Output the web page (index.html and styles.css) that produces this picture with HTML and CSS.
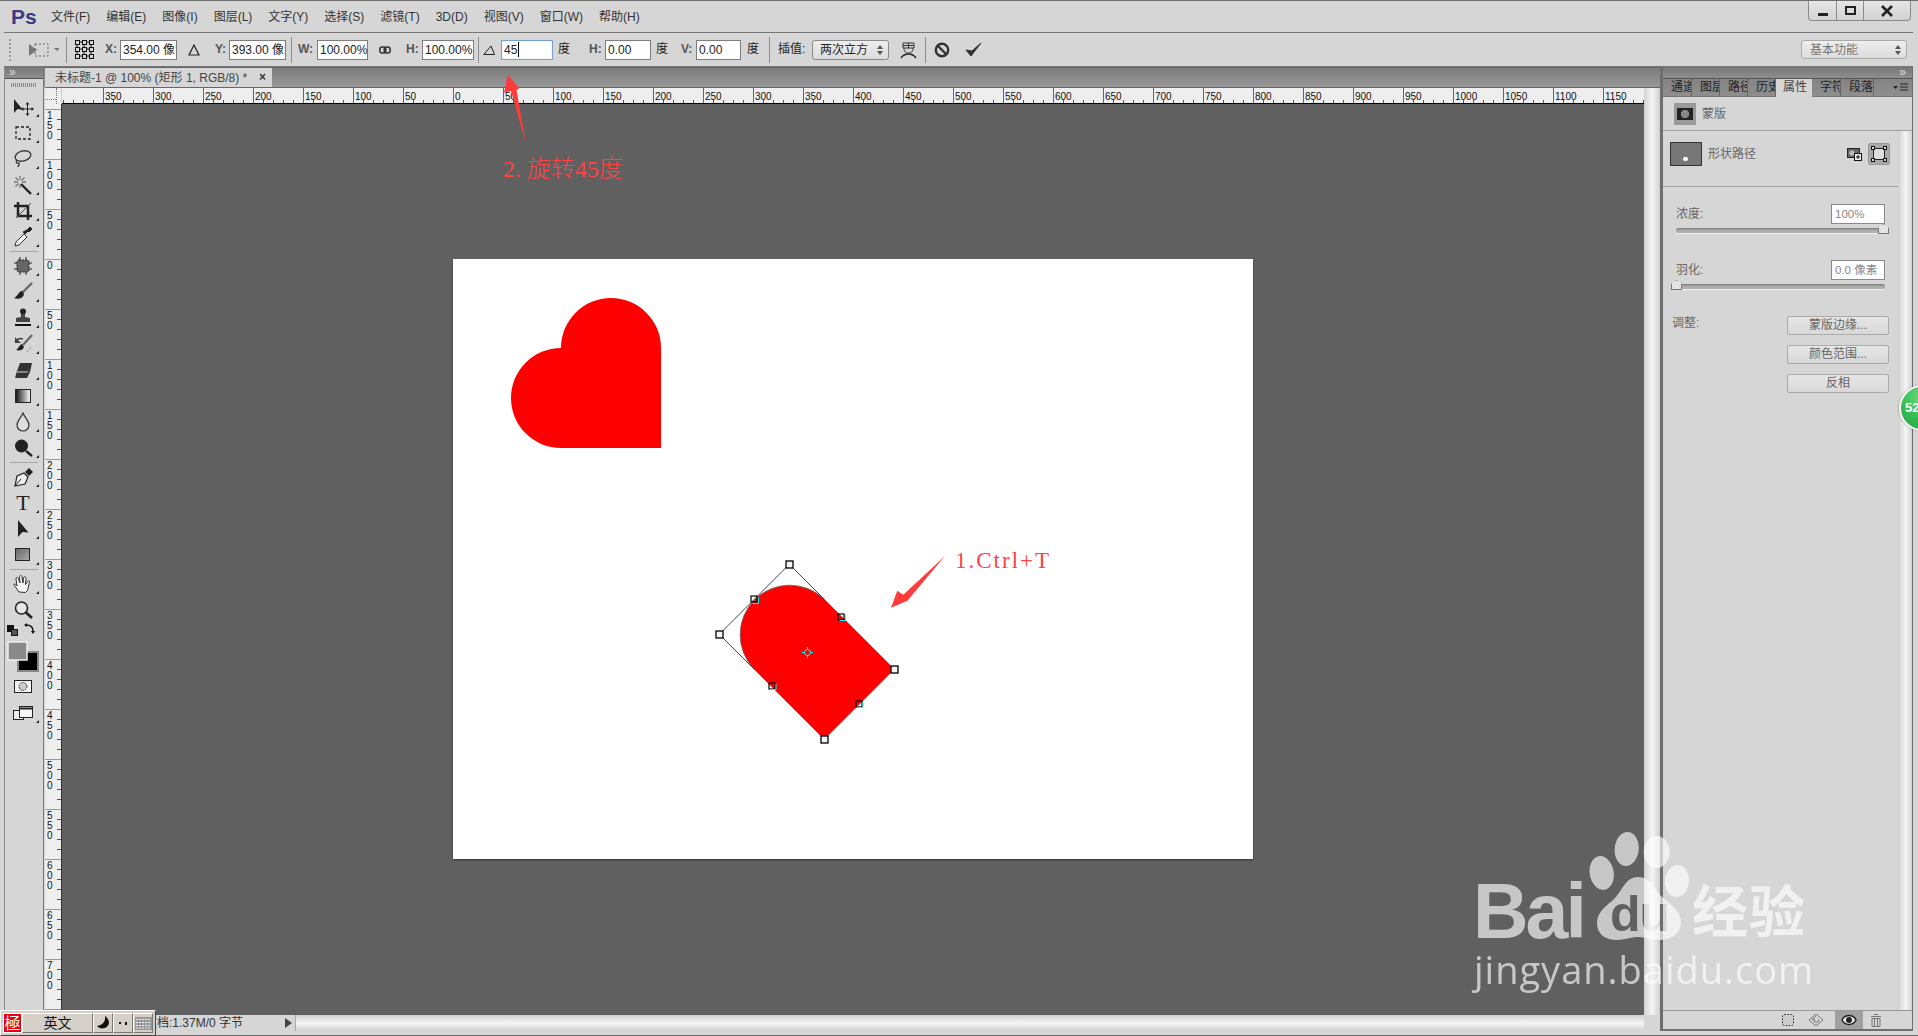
FILE: index.html
```html
<!DOCTYPE html>
<html lang="zh">
<head>
<meta charset="utf-8">
<title>Photoshop</title>
<link rel="stylesheet" href="styles.css">
</head>
<body>
<div class="app">
  <header class="titlebar">
    <div class="logo">Ps</div>
    <nav class="menu">
      <span>文件(F)</span><span>编辑(E)</span><span>图像(I)</span><span>图层(L)</span><span>文字(Y)</span><span>选择(S)</span><span>滤镜(T)</span><span>3D(D)</span><span>视图(V)</span><span>窗口(W)</span><span>帮助(H)</span>
    </nav>
    <div class="winbtns">
      <div class="winbtn wb-min"><i class="min-bar"></i></div>
      <div class="winbtn wb-max"><i class="max-box"></i></div>
      <div class="winbtn wb-close">
        <svg width="14" height="12" viewBox="0 0 14 12"><path d="M2 1l10 10M12 1L2 11" stroke="#222" stroke-width="2.6" fill="none"/></svg>
      </div>
    </div>
  </header>

  <section class="options">
    <i class="grip ml5"></i>
    <svg class="ml17 w22" width="22" height="18" viewBox="0 0 22 18"><path d="M1 3l8 6-8 6z" fill="#777"/><rect x="7" y="3" width="13" height="12" fill="none" stroke="#666" stroke-dasharray="2 2"/></svg>
    <svg class="ml4 w5" width="5" height="4" viewBox="0 0 5 4"><path d="M0 0h6L3 3z" fill="#777"/></svg>
    <i class="sep ml7"></i>
    <svg class="ml8 w19" width="19" height="24" viewBox="0 0 19 24"><g fill="#d6d6d6" stroke="#111"><rect x=".5" y="2.5" width="4" height="4"/><rect x="7.5" y="2.5" width="4" height="4"/><rect x="14.5" y="2.5" width="4" height="4"/><rect x=".5" y="9.5" width="4" height="4"/><rect x="7.5" y="9.5" width="4" height="4"/><rect x="14.5" y="9.5" width="4" height="4"/><rect x=".5" y="16.5" width="4" height="4"/><rect x="7.5" y="16.5" width="4" height="4"/><rect x="14.5" y="16.5" width="4" height="4"/></g><path d="M2 7v2M9 7v2M16 7v2M2 14v2M9 14v2M16 14v2M5 4h2M12 4h2M5 11h2M12 11h2M5 18h2M12 18h2" stroke="#111"/></svg>
    <span class="lab ml11 w11">X:</span>
    <div class="field ml4 w57">354.00 像素</div>
    <svg class="ml11 w12" width="12" height="12" viewBox="0 0 12 12"><path d="M6 1L1 11h10z" fill="none" stroke="#222" stroke-width="1.2"/></svg>
    <span class="lab ml15 w10">Y:</span>
    <div class="field ml4 w57">393.00 像素</div>
    <i class="sep ml5"></i>
    <span class="lab ml6 w14">W:</span>
    <div class="field ml5 w51">100.00%</div>
    <svg class="ml11 w12" width="12" height="8" viewBox="0 0 12 8"><rect x=".8" y="1" width="6" height="6" rx="2.5" fill="none" stroke="#333" stroke-width="1.5"/><rect x="5.2" y="1" width="6" height="6" rx="2.5" fill="none" stroke="#333" stroke-width="1.5"/></svg>
    <span class="lab ml15 w11">H:</span>
    <div class="field ml5 w52">100.00%</div>
    <i class="sep ml4"></i>
    <svg class="ml4 w12" width="12" height="10" viewBox="0 0 12 10"><path d="M11.5 9.5H.8L8 1z" fill="none" stroke="#222"/></svg>
    <div class="field focus ml6 w52">45<i class="caret"></i></div>
    <span class="unit ml5 w12">度</span>
    <span class="lab ml19 w11">H:</span>
    <div class="field ml5 w46">0.00</div>
    <span class="unit ml5 w12">度</span>
    <span class="lab ml13 w11">V:</span>
    <div class="field ml4 w45">0.00</div>
    <span class="unit ml6 w12">度</span>
    <i class="sep ml10"></i>
    <span class="unit ml8 w28">插值:</span>
    <div class="select ml6 w77"><span>两次立方</span><i class="updown"></i></div>
    <svg class="ml11 w17" width="17" height="20" viewBox="0 0 17 20"><path d="M3 3h11v5H3zM3 5.500h11M8.500 3v5M4 8c0 4 2 5 4.500 5S13 12 13 8" fill="none" stroke="#333"/><path d="M1 18c2-3 4-4 7.500-4S14 15 16 18" fill="none" stroke="#222" stroke-width="1.500"/></svg>
    <i class="sep ml8"></i>
    <svg class="ml8 w16" width="16" height="16" viewBox="0 0 16 16"><circle cx="8" cy="8" r="6.200" fill="none" stroke="#333" stroke-width="2.400"/><path d="M3.500 3.500l9 9" stroke="#333" stroke-width="2.400"/></svg>
    <svg class="ml15 w17" width="17" height="15" viewBox="0 0 17 15"><path d="M1 8l5 6L16 1l-9 8z" fill="#333" stroke="#333"/></svg>
    <div class="select workspace"><span>基本功能</span><i class="updown"></i></div>
  </section>

  <main class="main">
    <aside class="leftdock">
      <div class="dockhead"><span class="chev">»</span></div>
      <div class="toolbar">
        <i class="toolgrip"></i>
        <div class="tool more"><svg width="24" height="22" viewBox="0 0 24 22"><path d="M3 3v14l3.500-4 5.500 1z" fill="#222"/><path d="M16.500 7v12M11 13h11" stroke="#222"/><path d="M16.500 6l-2 2.500h4zM16.500 20l-2-2.500h4zM10 13l2.500-2v4zM23 13l-2.500-2v4z" fill="#222"/></svg></div>
        <div class="tool more"><svg width="22" height="22" viewBox="0 0 22 22"><rect x="4" y="5" width="14" height="12" fill="none" stroke="#222" stroke-width="1.300" stroke-dasharray="3 2"/></svg></div>
        <div class="tool more"><svg width="22" height="22" viewBox="0 0 22 22"><ellipse cx="11" cy="8" rx="8" ry="5" transform="rotate(-15 11 8)" fill="none" stroke="#333" stroke-width="1.300"/><path d="M5 12c-2 2 0 4 2 3 1 1-1 3-1 4" fill="none" stroke="#333" stroke-width="1.300"/></svg></div>
        <div class="tool more"><svg width="22" height="22" viewBox="0 0 22 22"><path d="M9 10l10 10" stroke="#222" stroke-width="2.400"/><path d="M8 2v4M8 10v4M2 8h4M10 8h4M3.500 3.500l3 3M12.500 3.500l-3 3M3.500 12.500l3-3" stroke="#777" stroke-width="1.300"/></svg></div>
        <div class="tool more"><svg width="22" height="22" viewBox="0 0 22 22"><path d="M6 2v14h14M2 6h14v14" fill="none" stroke="#222" stroke-width="2.500"/><path d="M4 18L19 3" stroke="#444"/></svg></div>
        <div class="tool more"><svg width="22" height="22" viewBox="0 0 22 22"><path d="M3 20l1-4 8-8 3 3-8 8z" fill="#f2f2f2" stroke="#333"/><path d="M11 6l2 2 3-3 1 1 3-3-1-1-1-1-3 3z" fill="#222" stroke="#222"/></svg></div>
        <i class="toolsep"></i>
        <div class="tool more"><svg width="22" height="22" viewBox="0 0 22 22"><rect x="5" y="5" width="12" height="12" rx="2" fill="#666" stroke="#222" stroke-dasharray="2 1"/><path d="M2 8h3M2 14h3M17 8h3M17 14h3M8 2v3M14 2v3M8 17v3M14 17v3" stroke="#222"/></svg></div>
        <div class="tool more"><svg width="22" height="22" viewBox="0 0 22 22"><path d="M20 2L10 12" stroke="#666" stroke-width="2.400"/><path d="M10 10c-3 0-4 5-8 7 3 1.500 9 1 10-4z" fill="#222"/></svg></div>
        <div class="tool more"><svg width="22" height="22" viewBox="0 0 22 22"><circle cx="11" cy="4.500" r="3" fill="#222"/><path d="M9 7h4v3l5 1v4H4v-4l5-1z" fill="#444"/><path d="M3 18h16" stroke="#111" stroke-width="2"/></svg></div>
        <div class="tool more"><svg width="22" height="22" viewBox="0 0 22 22"><path d="M3 9c2-3 5-4 8-3" fill="none" stroke="#444" stroke-width="1.500"/><path d="M3 4v6h6z" fill="#444"/><path d="M20 2L11 12" stroke="#666" stroke-width="2.200"/><path d="M10 11c-2 0-3 4-6 6 3 1 7 .5 8-3z" fill="#222"/><path d="M15 19l4-5" stroke="#666" stroke-dasharray="1 1.500"/></svg></div>
        <div class="tool more"><svg width="22" height="22" viewBox="0 0 22 22"><path d="M8 4h12l-2 9-3 6H3l2-7z" fill="#333"/><path d="M5 12h12l-2 2H4z" fill="#888"/></svg></div>
        <div class="tool more"><svg width="22" height="22" viewBox="0 0 22 22"><defs><linearGradient id="grA"><stop offset="0" stop-color="#111"/><stop offset="1" stop-color="#fff"/></linearGradient></defs><rect x="3.500" y="4.500" width="15" height="13" fill="url(#grA)" stroke="#222"/></svg></div>
        <div class="tool more"><svg width="22" height="22" viewBox="0 0 22 22"><path d="M11 2c2 5 6 8 6 12a6 6 0 0 1-12 0c0-4 4-7 6-12z" fill="#ddd" stroke="#333" stroke-width="1.200"/></svg></div>
        <div class="tool more"><svg width="22" height="22" viewBox="0 0 22 22"><circle cx="9.500" cy="9" r="6.500" fill="#222"/><path d="M14 14l6 5" stroke="#222" stroke-width="2.400"/></svg></div>
        <i class="toolsep"></i>
        <div class="tool more"><svg width="22" height="22" viewBox="0 0 22 22"><path d="M3 20l2-10 7-3 4 4-3 7z" fill="#eee" stroke="#222" stroke-width="1.200"/><path d="M3 20l6-7" stroke="#222"/><path d="M13 6l4-4 4 4-4 4z" fill="#222"/></svg></div>
        <div class="tool more typetool">T</div>
        <div class="tool more"><svg width="22" height="22" viewBox="0 0 22 22"><path d="M6 2v17l4.500-5 6 .5z" fill="#222"/></svg></div>
        <div class="tool more"><svg width="22" height="22" viewBox="0 0 22 22"><defs><linearGradient id="grB" x2="1" y2="1"><stop offset="0" stop-color="#666"/><stop offset="1" stop-color="#aaa"/></linearGradient></defs><rect x="3.500" y="4.500" width="14" height="12" fill="url(#grB)" stroke="#222"/></svg></div>
        <i class="toolsep"></i>
        <div class="tool more"><svg width="22" height="22" viewBox="0 0 22 22"><path d="M7 19l-5-7c0-2 2-1 3 1L4 6c0-2 2-2 2.500 0L8 10 7.500 4c0-2 2.500-2 2.500 0l1 6 .5-5c.5-2 2.500-1.500 2.500.5l-.5 6 2-3c1.500-1.500 2.500 0 2 1l-2 8-2 2z" fill="#f4f4f4" stroke="#333"/></svg></div>
        <div class="tool"><svg width="22" height="22" viewBox="0 0 22 22"><circle cx="9.500" cy="9" r="6" fill="#e8e8e8" stroke="#222" stroke-width="1.600"/><path d="M14 13.500l6 5.500" stroke="#222" stroke-width="2.600"/></svg></div>
        <div class="colors">
          <svg width="39" height="51" viewBox="2 0 39 51"><rect x="4.500" y="2.500" width="6" height="6" fill="#111" stroke="#111"/><rect x="8.500" y="6.500" width="6" height="6" fill="#555" stroke="#111"/><path d="M23 2c4 0 7 2 7 6" fill="none" stroke="#111" stroke-width="1.400"/><path d="M21 2l3-2v4zM30 11l-2-3h4z" fill="#111"/><rect x="15" y="29" width="20" height="19" fill="#000" stroke="#888" stroke-width="2"/><rect x="5" y="19" width="19" height="18" fill="#8a8a8a" stroke="#eee" stroke-width="1.500"/></svg>
        </div>
        <div class="tool"><svg width="22" height="18" viewBox="0 0 22 18"><rect x="2.500" y="2.500" width="17" height="12" fill="#f4f4f4" stroke="#222"/><circle cx="11" cy="8.500" r="4" fill="#ccc" stroke="#222" stroke-dasharray="1.500 1"/></svg></div>
        <div class="tool more"><svg width="22" height="22" viewBox="0 0 22 22"><rect x="1.500" y="8.500" width="10" height="9" fill="#eee" stroke="#222"/><rect x="7.500" y="4.500" width="13" height="11" fill="#f4f4f4" stroke="#222"/><path d="M7.500 6.500h13" stroke="#222" stroke-width="2"/></svg></div>
      </div>
    </aside>

    <section class="center">
      <div class="tabbar">
        <div class="doctab"><span class="doctitle">未标题-1 @ 100% (矩形 1, RGB/8) *</span><span class="tabx">×</span></div>
      </div>
      <div class="hruler">
        <div class="corner"></div>
        <div class="hstrip">
          <span class="hpart"></span>
          <span class="hcell">350</span><span class="hcell">300</span><span class="hcell">250</span><span class="hcell">200</span><span class="hcell">150</span><span class="hcell">100</span><span class="hcell">50</span><span class="hcell">0</span><span class="hcell">50</span><span class="hcell">100</span><span class="hcell">150</span><span class="hcell">200</span><span class="hcell">250</span><span class="hcell">300</span><span class="hcell">350</span><span class="hcell">400</span><span class="hcell">450</span><span class="hcell">500</span><span class="hcell">550</span><span class="hcell">600</span><span class="hcell">650</span><span class="hcell">700</span><span class="hcell">750</span><span class="hcell">800</span><span class="hcell">850</span><span class="hcell">900</span><span class="hcell">950</span><span class="hcell">1000</span><span class="hcell">1050</span><span class="hcell">1100</span><span class="hcell">1150</span>
        </div>
        <div class="vscroll"></div>
      </div>
      <div class="work">
        <div class="vruler">
          <span class="vpart"></span>
          <span class="vcell"><b>150</b></span><span class="vcell"><b>100</b></span><span class="vcell"><b>50</b></span><span class="vcell"><b>0</b></span><span class="vcell"><b>50</b></span><span class="vcell"><b>100</b></span><span class="vcell"><b>150</b></span><span class="vcell"><b>200</b></span><span class="vcell"><b>250</b></span><span class="vcell"><b>300</b></span><span class="vcell"><b>350</b></span><span class="vcell"><b>400</b></span><span class="vcell"><b>450</b></span><span class="vcell"><b>500</b></span><span class="vcell"><b>550</b></span><span class="vcell"><b>600</b></span><span class="vcell"><b>650</b></span><span class="vcell"><b>700</b></span><span class="vcell"></span>
        </div>
        <div class="canvas">
          <div class="doc">
            <svg class="art" width="800" height="600" viewBox="453 259 800 600">
              <path d="M561 348a50 50 0 0 1 100 0v100H561a50 50 0 0 1 0-100z" fill="#ff0000"/>
              <path d="M894.300 669.300L824.300 739.300L754.300 669.300A49.500 49.500 0 0 1 824.300 599.300z" fill="#ff0000" stroke="#666" stroke-width=".8"/>
              <path d="M789.300 564.300L719.300 634.300L754.300 669.300M789.300 564.300L824.300 599.300" fill="none" stroke="#333" stroke-width=".9"/>
              <g fill="#f4f4f4" stroke="#000" stroke-width="1.300">
                <rect x="786" y="561" width="7" height="7"/><rect x="716" y="631" width="7" height="7"/><rect x="891" y="666" width="7" height="7"/><rect x="821" y="736" width="7" height="7"/>
              </g>
              <g fill="none" stroke="#000" stroke-width="1.200">
                <rect x="751" y="596" width="6" height="6"/><rect x="838" y="614" width="6" height="6"/><rect x="769" y="683" width="6" height="6"/><rect x="856" y="701" width="6" height="6"/>
              </g>
              <g fill="none" stroke="#0ff" stroke-width="1">
                <path d="M752.500 603.500h6v-6M839.500 620.500h6v-6M770 689.500h6v-6M857 707.500h6v-6"/>
                <circle cx="807.500" cy="652.500" r="3"/><path d="M802 652.500h3M810 652.500h3M807.500 647v3M807.500 655v3"/>
              </g>
            </svg>
          </div>
        </div>
        <div class="vscroll"></div>
      </div>
      <div class="statusrow">
        <div class="status"><span class="statustext">文档:1.37M/0 字节</span><i class="statusarrow"></i></div>
        <div class="hscroll"></div>
        <div class="scrollcorner"></div>
      </div>
    </section>

    <aside class="rightdock">
      <div class="dockhead righthead"><span class="chev">»</span></div>
      <div class="ptabs">
        <span class="ptab pw29">通道</span><span class="ptab pw28">图层</span><span class="ptab pw28">路径</span><span class="ptab pw28">历史</span><span class="ptab pw36 active">属性</span><span class="ptab pw29">字符</span><span class="ptab pw33">段落</span>
        <svg class="pmenu" width="16" height="9" viewBox="0 0 16 9"><path d="M0 3h5L2.500 6z" fill="#222"/><path d="M7 1h8M7 4h8M7 7h8" stroke="#222"/></svg>
      </div>
      <div class="maskrow">
        <div class="maskicon"><i class="maskdot"></i></div>
        <span>蒙版</span>
      </div>
      <div class="pbody">
        <div class="pcontent">
          <div class="shaperow">
            <div class="shapethumb"><i></i></div>
            <span class="shapename">形状路径</span>
            <svg class="addmask" width="15" height="14" viewBox="0 0 15 14"><rect x=".5" y="1.500" width="12" height="9" fill="#666" stroke="#222"/><circle cx="5" cy="6" r="2.600" fill="#bbb"/><rect x="7.500" y="6.500" width="7" height="7" fill="#eee" stroke="#111"/><path d="M11 8v4M9 10h4" stroke="#111"/></svg>
            <div class="pathbtn"><svg width="16" height="16" viewBox="0 0 16 16"><rect x="2.500" y="2.500" width="11" height="11" fill="#ddd" stroke="#222"/><g fill="#ddd" stroke="#111"><rect x=".5" y=".5" width="3" height="3"/><rect x="12.500" y=".5" width="3" height="3"/><rect x=".5" y="12.500" width="3" height="3"/><rect x="12.500" y="12.500" width="3" height="3"/></g></svg></div>
          </div>
          <div class="propline first"><span>浓度:</span><div class="pfield">100%</div></div>
          <div class="slider"><i class="thumb thumb-right"></i></div>
          <div class="propline"><span>羽化:</span><div class="pfield">0.0 像素</div></div>
          <div class="slider"><i class="thumb thumb-left"></i></div>
          <div class="adjust">
            <span class="adjlabel">调整:</span>
            <div class="adjbtns">
              <div class="pbtn">蒙版边缘...</div>
              <div class="pbtn">颜色范围...</div>
              <div class="pbtn">反相</div>
            </div>
          </div>
        </div>
        <div class="pscroll"></div>
      </div>
      <div class="pfoot">
        <svg class="fi1" width="14" height="14" viewBox="0 0 14 14"><rect x="1.500" y="1.500" width="11" height="11" rx="2" fill="#ccc" stroke="#222" stroke-dasharray="1.500 1.500"/></svg>
        <svg class="fi2" width="16" height="14" viewBox="0 0 16 14"><path d="M8 1l7 6-7 6-7-6z" fill="none" stroke="#777"/><path d="M8 3L4 6.500h2.500V9h4V6.500" fill="none" stroke="#777"/></svg>
        <div class="fi3"><svg width="16" height="12" viewBox="0 0 16 12"><path d="M1 6c3-6 11-6 14 0-3 6-11 6-14 0z" fill="#eee" stroke="#222" stroke-width="1.500"/><circle cx="8" cy="6" r="3" fill="#222"/></svg></div>
        <svg class="fi4" width="12" height="14" viewBox="0 0 12 14"><path d="M4 1.500h4M1 3.500h10M2 5.500h8v8H2zM4.500 6v7M7.500 6v7" fill="none" stroke="#777"/></svg>
      </div>
    </aside>
  </main>
  <div class="winbottom"></div>

  <div class="badge"><span>52</span></div>

  <div class="ime">
    <div class="seal">極</div>
    <div class="imebtn imelang">英文</div>
    <div class="imebtn"><svg width="16" height="16" viewBox="0 0 16 16"><path d="M10 1c1 5-2 9-8 10 3 4 11 3 12-3 0-3-2-6-4-7z" fill="#111"/></svg></div>
    <div class="imebtn imedots"><svg width="10" height="8" viewBox="0 0 10 8"><rect x="1" y="3" width="2" height="2" fill="#111"/><rect x="7" y="3" width="2" height="3" fill="#111"/></svg></div>
    <div class="imebtn imekey"><svg width="17" height="13" viewBox="0 0 17 13"><rect width="17" height="13" fill="#999"/><path d="M1 2.500h15M1 5.500h15M1 8.500h15M1 11h15" stroke="#eee" stroke-dasharray="2 1"/></svg></div>
  </div>

  <svg class="overlay" width="1918" height="1036" viewBox="0 0 1918 1036">
    <defs>
      <mask id="duMask" maskUnits="userSpaceOnUse" x="1590" y="870" width="100" height="80">
        <rect x="1590" y="870" width="100" height="80" fill="#fff"/>
        <text x="1610" y="931" class="wm-du" fill="#000">du</text>
      </mask>
    </defs>
    <path d="M507.700 75L519.300 88.300L516.500 90L525.700 142.700L511 91L504 92.700z" fill="#ff3b3b"/>
    <text x="503" y="177" class="note cjk">2. 旋转45度</text>
    <path d="M891 607.700L897.300 590.700L903.300 594.700L945 556L907.300 600.700z" fill="#ff3b3b"/>
    <text x="955" y="568" class="note latin">1.Ctrl+T</text>
    <g class="wm">
      <text x="1473" y="938" class="wm-bai">Bai</text>
      <ellipse cx="1626.700" cy="849" rx="12" ry="17" transform="rotate(5 1626.700 849)"/>
      <ellipse cx="1656.700" cy="852" rx="13" ry="16"/>
      <ellipse cx="1601.700" cy="873" rx="12" ry="17" transform="rotate(-10 1601.700 873)"/>
      <ellipse cx="1677" cy="881" rx="12" ry="16" transform="rotate(5 1677 881)"/>
      <path d="M1638 877c12 0 16 12 24 20 8 7 19 14 19 25 0 12-10 18-22 18-8 0-13-3-21-3s-13 3-21 3c-12 0-20-6-20-17 0-12 10-17 18-25 8-9 11-21 23-21z" mask="url(#duMask)"/>
      <text x="1692" y="932" class="wm-cn">经验</text>
      <text x="1474" y="984" class="wm-url">jingyan.baidu.com</text>
    </g>
  </svg>
</div>
</body>
</html>
```

FILE: styles.css
```css
* { box-sizing: border-box; }
html, body { margin: 0; padding: 0; }
body {
  width: 1918px;
  height: 1036px;
  overflow: hidden;
  background: #d6d6d6;
  color: #333;
  font: 12px/1.2 "Liberation Sans", "Noto Sans CJK SC", sans-serif;
}
i { display: block; font-style: normal; }
svg { display: block; flex: none; }

.app { position: relative; width: 1918px; height: 1036px; overflow: hidden; display: flex; flex-direction: column; border-top: 1px solid #6e6e6e; }

/* Title bar */
.titlebar { height: 31px; flex: none; display: flex; align-items: center; }
.logo { width: 51px; padding-left: 11px; color: #3a3b85; font-size: 21px; font-weight: 700; line-height: 1; margin-top: -1px; }
.menu { display: flex; gap: 16px; color: #333; white-space: nowrap; padding-top: 1px; }
.winbtns { margin-left: auto; margin-right: 7px; align-self: flex-start; display: flex; height: 20px; border: 1px solid #8a8a8a; border-top: 0; border-radius: 0 0 4px 4px; background: linear-gradient(#e6e6e6, #d2d2d2); }
.winbtn { display: flex; align-items: center; justify-content: center; border-right: 1px solid #8a8a8a; }
.winbtn:last-child { border-right: 0; }
.wb-min { width: 28px; }
.wb-max { width: 27px; }
.wb-close { width: 46px; }
.min-bar { width: 10px; height: 3px; background: #222; margin-top: 8px; }
.max-box { width: 11px; height: 9px; border: 2px solid #222; }

/* Options bar */
.options { height: 35px; flex: none; margin: 0 5px 0 4px; display: flex; align-items: center; border-top: 1px solid #777; border-bottom: 1px solid #777; }
.grip { height: 22px; border-left: 2px dotted #999; width: 2px; }
.sep { width: 1px; height: 26px; background: #8f8f8f; }
.lab { font-size: 12px; color: #555; font-weight: 700; white-space: nowrap; }
.unit { font-size: 12px; color: #222; white-space: nowrap; }
.field { height: 20px; background: #fff; border: 1px solid #7d7d7d; padding-left: 2px; font-size: 12px; line-height: 18px; color: #222; overflow: hidden; white-space: nowrap; display: flex; }
.field.focus { border-color: #7aa0d0; box-shadow: inset 0 0 1px #7aa0d0; }
.caret { width: 1px; height: 15px; background: #000; margin: 1px 0 0 1px; }
.select { height: 20px; border: 1px solid #8a8a8a; border-radius: 3px; background: linear-gradient(#eee, #dcdcdc); display: flex; align-items: center; padding: 1px 5px 0 7px; justify-content: space-between; color: #222; white-space: nowrap; }
.updown { width: 6px; height: 10px; position: relative; }
.updown::before, .updown::after { content: ""; position: absolute; left: 0; border-left: 3px solid transparent; border-right: 3px solid transparent; }
.updown::before { top: 0; border-bottom: 4px solid #555; }
.updown::after { bottom: 0; border-top: 4px solid #555; }
.workspace { margin-left: auto; margin-right: 6px; width: 106px; height: 19px; color: #777; border-color: #aaa; font-size: 12px; }
.workspace span { margin-left: 1px; }

.ml4 { margin-left: 4px; } .ml5 { margin-left: 5px; } .ml6 { margin-left: 6px; } .ml7 { margin-left: 7px; } .ml8 { margin-left: 8px; }
.ml10 { margin-left: 10px; } .ml11 { margin-left: 11px; } .ml13 { margin-left: 13px; } .ml15 { margin-left: 15px; } .ml17 { margin-left: 17px; } .ml19 { margin-left: 19px; }
.w5 { width: 5px; } .w10 { width: 10px; } .w11 { width: 11px; } .w12 { width: 12px; } .w14 { width: 14px; } .w16 { width: 16px; } .w17 { width: 17px; } .w19 { width: 19px; } .w22 { width: 22px; } .w28 { width: 28px; }
.w45 { width: 45px; } .w46 { width: 46px; } .w51 { width: 51px; } .w52 { width: 52px; } .w57 { width: 57px; } .w77 { width: 77px; }

/* Main */
.main { flex: none; height: 964px; display: flex; margin: 0 5px 0 4px; border-bottom: 2px solid #6e6e6e; }
.winbottom { flex: 1; border-bottom: 1px solid #6e6e6e; }

.dockhead { height: 12px; background: linear-gradient(#777, #8f8f8f); border-bottom: 1px solid #555; color: #ddd; font-size: 12px; line-height: 10px; padding-left: 4px; }
.chev { display: block; }
.righthead { text-align: right; padding: 0 6px 0 0; }

.leftdock { width: 40px; flex: none; display: flex; flex-direction: column; border-left: 1px solid #8a8a8a; border-right: 1px solid #777; }
.toolbar { flex: 1; display: flex; flex-direction: column; }
.toolgrip { height: 11px; flex: none; margin: 4px 6px 0; background: repeating-linear-gradient(90deg, #888 0 1px, transparent 1px 2px) center top / 100% 4px no-repeat; }
.tool { height: 26px; flex: none; display: flex; align-items: center; justify-content: center; position: relative; padding-right: 2px; }
.tool.more::after { content: ""; position: absolute; right: 4px; bottom: 3px; border-left: 3px solid transparent; border-bottom: 3px solid #222; }
.typetool { font: 22px/26px "Liberation Serif", serif; color: #222; }
.toolsep { flex: none; margin: 1px 5px 0; border-top: 1px solid #a8a8a8; height: 2px; }
.colors { height: 51px; flex: none; }

.center { width: 1616px; flex: none; display: flex; flex-direction: column; }
.tabbar { height: 20px; flex: none; background: linear-gradient(#7c7c7c, #989898); border-top: 1px solid #666; padding-left: 1px; display: flex; }
.doctab { width: 227px; background: #d6d6d6; display: flex; padding: 3px 0 0 10px; font-size: 12px; color: #444; white-space: nowrap; justify-content: space-between; }
.tabx { margin-right: 6px; font-weight: 700; color: #333; line-height: 13px; }
.hruler { height: 17px; flex: none; display: flex; margin-left: 1px; border-top: 1px solid #666; }
.corner { width: 17px; flex: none; background: #eee; border-right: 1px solid #ccc; position: relative; }
.corner::before { content: ""; position: absolute; left: 0; right: 5px; bottom: 4px; border-top: 1px dotted #777; }
.corner::after { content: ""; position: absolute; right: 4px; top: 0; bottom: 0; border-left: 1px dotted #777; }
.hstrip { flex: 1; min-width: 0; display: flex; overflow: hidden; border-bottom: 1px solid #000; background: #eee linear-gradient(90deg, #555 1px, transparent 1px) 1px 100% / 10px 3px repeat-x; }
.hpart { width: 41px; flex: none; }
.hcell { width: 50px; flex: none; border-left: 1px solid #666; padding: 3px 0 0 1px; font-size: 10px; line-height: 11px; color: #111; }

.work { height: 911px; flex: none; display: flex; }
.vruler { width: 17px; flex: none; margin-left: 1px; display: flex; flex-direction: column; overflow: hidden; background: #eee linear-gradient(#555 1px, transparent 1px) 100% 5px / 4px 10px repeat-y; border-right: 1px solid #333; }
.vpart { height: 5px; flex: none; }
.vcell { height: 50px; flex: none; border-top: 1px solid #999; padding: 1px 0 0 2px; }
.vcell b { display: block; width: 6px; font-weight: 400; font-size: 10px; line-height: 10px; color: #111; word-break: break-all; }
.canvas { flex: 1; background: #606060; padding: 155px 0 0 391px; min-width: 0; }
.doc { width: 800px; height: 600px; background: #fff; box-shadow: 0 1px 2px rgba(0,0,0,.45); }
.vscroll { width: 16px; flex: none; background: linear-gradient(90deg, #d2d2d2, #f6f6f6 50%, #d0d0d0); }

.statusrow { height: 16px; flex: none; display: flex; }
.status { width: 252px; flex: none; display: flex; align-items: center; padding-left: 101px; border-right: 1px solid #aaa; position: relative; background: #d6d6d6; }
.statustext { color: #333; white-space: nowrap; }
.statusarrow { position: absolute; right: 3px; top: 3px; border-left: 7px solid #444; border-top: 5px solid transparent; border-bottom: 5px solid transparent; }
.hscroll { flex: 1; background: linear-gradient(#d0d0d0, #f6f6f6 50%, #d0d0d0); }
.scrollcorner { width: 16px; flex: none; background: #d6d6d6; }

/* Right dock */
.rightdock { width: 253px; flex: none; display: flex; flex-direction: column; border-left: 3px solid #6e6e6e; border-right: 1px solid #6e6e6e; }
.ptabs { height: 18px; flex: none; display: flex; background: linear-gradient(#848484, #8e8e8e); border-bottom: 1px solid #777; position: relative; }
.ptab { padding-left: 8px; overflow: hidden; white-space: nowrap; line-height: 17px; color: #222; border-right: 1px solid #666; }
.ptab.active { background: #d6d6d6; color: #444; padding-left: 7px; border-right: 0; height: 18px; }
.pw28 { width: 28px; } .pw29 { width: 29px; } .pw33 { width: 33px; } .pw36 { width: 36px; }
.pmenu { position: absolute; right: 3px; top: 4px; }
.maskrow { height: 34px; flex: none; display: flex; align-items: center; padding-left: 11px; gap: 6px; border-bottom: 1px solid #a0a0a0; color: #666; padding-top: 1px; }
.maskicon { width: 22px; height: 22px; border: 1px solid #999; background: #999; display: flex; align-items: center; justify-content: center; padding: 2px; }
.maskdot { width: 16px; height: 12px; background: radial-gradient(circle at 50% 50%, #888 0 4px, #222 4.500px); }
.pbody { flex: 1; display: flex; min-height: 0; }
.pcontent { width: 235px; flex: none; }
.pscroll { flex: 1; background: linear-gradient(90deg, #d0d0d0, #f6f6f6 55%, #d2d2d2); }
.shaperow { height: 56px; display: flex; align-items: flex-start; padding: 11px 8px 0 7px; border-bottom: 1px solid #a0a0a0; color: #666; }
.shapethumb { width: 32px; height: 24px; background: #777; border: 1px solid #333; position: relative; }
.shapethumb i { position: absolute; left: 12px; top: 14px; width: 5px; height: 4px; background: #fff; border-radius: 2px; }
.shapename { margin: 5px 0 0 6px; }
.addmask { margin: 5px 0 0 auto; }
.pathbtn { width: 22px; height: 22px; margin: 1px 0 0 6px; background: #aaa; border: 1px solid #999; border-radius: 2px; display: flex; align-items: center; justify-content: center; }
.propline { display: flex; align-items: center; justify-content: space-between; margin: 27px 13px 4px 13px; height: 20px; color: #666; }
.propline.first { margin-top: 17px; }
.pfield { width: 54px; height: 20px; background: #fff; border: 1px solid #888; color: #888; line-height: 18px; padding-left: 3px; font-size: 11.500px; white-space: nowrap; overflow: hidden; }
.slider { height: 5px; margin: 0 13px; background: linear-gradient(#777, #a8a8a8 40%, #b0b0b0); border-radius: 2px; position: relative; box-shadow: 0 1px 0 #f0f0f0; }
.thumb { position: absolute; top: -4px; width: 11px; height: 10px; background: #e4e4e4; border: 1px solid #777; clip-path: polygon(50% 0, 100% 40%, 100% 100%, 0 100%, 0 40%); }
.thumb-right { right: -4px; }
.thumb-left { left: -5px; }
.adjust { display: flex; justify-content: space-between; margin: 27px 9px 0 9px; color: #666; }
.adjbtns { width: 102px; display: flex; flex-direction: column; gap: 10px; }
.pbtn { height: 19px; border: 1px solid #aaa; border-radius: 2px; background: linear-gradient(#e6e6e6, #d8d8d8); text-align: center; line-height: 17px; color: #666; }
.pfoot { height: 19px; flex: none; border-top: 1px solid #999; display: flex; align-items: center; padding-left: 118px; }
.fi2 { margin-left: 13px; }
.fi3 { width: 28px; height: 18px; margin-left: 11px; background: #a0a0a0; display: flex; align-items: center; justify-content: center; }
.fi4 { margin-left: 7px; }

/* Things over the window */
.badge { position: absolute; left: 1899px; top: 384px; width: 46px; height: 46px; border-radius: 50%; border: 2px solid #f4f4f4; background: radial-gradient(circle at 50% 25%, #66dd7a, #33b850 60%, #2aa545); box-shadow: 0 0 2px rgba(0,0,0,.45); color: #fff; font-weight: 700; font-size: 13px; line-height: 42px; padding-left: 4px; }
.ime { position: absolute; left: 0; top: 1009px; width: 156px; height: 26px; background: #d4d0c8; border: 1px solid; border-color: #fff #444 #444 #fff; display: flex; padding: 2px 1px 2px 2px; }
.seal { width: 19px; background: #e60012; color: #fff; font-size: 16px; line-height: 20px; text-align: center; border: 1px solid #fff; overflow: hidden; }
.imebtn { width: 20px; border: 1px solid; border-color: #fff #777 #777 #fff; background: #d4d0c8; display: flex; align-items: center; justify-content: center; }
.imelang { width: 71px; font-size: 14px; color: #111; }
.overlay { position: absolute; left: 0; top: -1px; pointer-events: none; }
.note { fill: #ff4343; font-size: 24px; }
.note.cjk { font-family: "Liberation Serif", "Noto Sans CJK SC", serif; font-size: 24px; font-weight: 300; }
.note.latin { font-family: "Liberation Serif", serif; font-size: 23px; letter-spacing: 2px; }
.wm { fill: #fff; opacity: .65; filter: blur(.5px); }
.wm-bai { font: 700 77px "Liberation Sans", sans-serif; letter-spacing: -3px; }
.wm-du { font: 700 50px "Liberation Sans", sans-serif; letter-spacing: -1px; }
.wm-cn { font: 700 56px "Noto Sans CJK SC", sans-serif; letter-spacing: 1px; }
.wm-url { font: 400 38px "Open Sans", sans-serif; letter-spacing: 1px; }
```
